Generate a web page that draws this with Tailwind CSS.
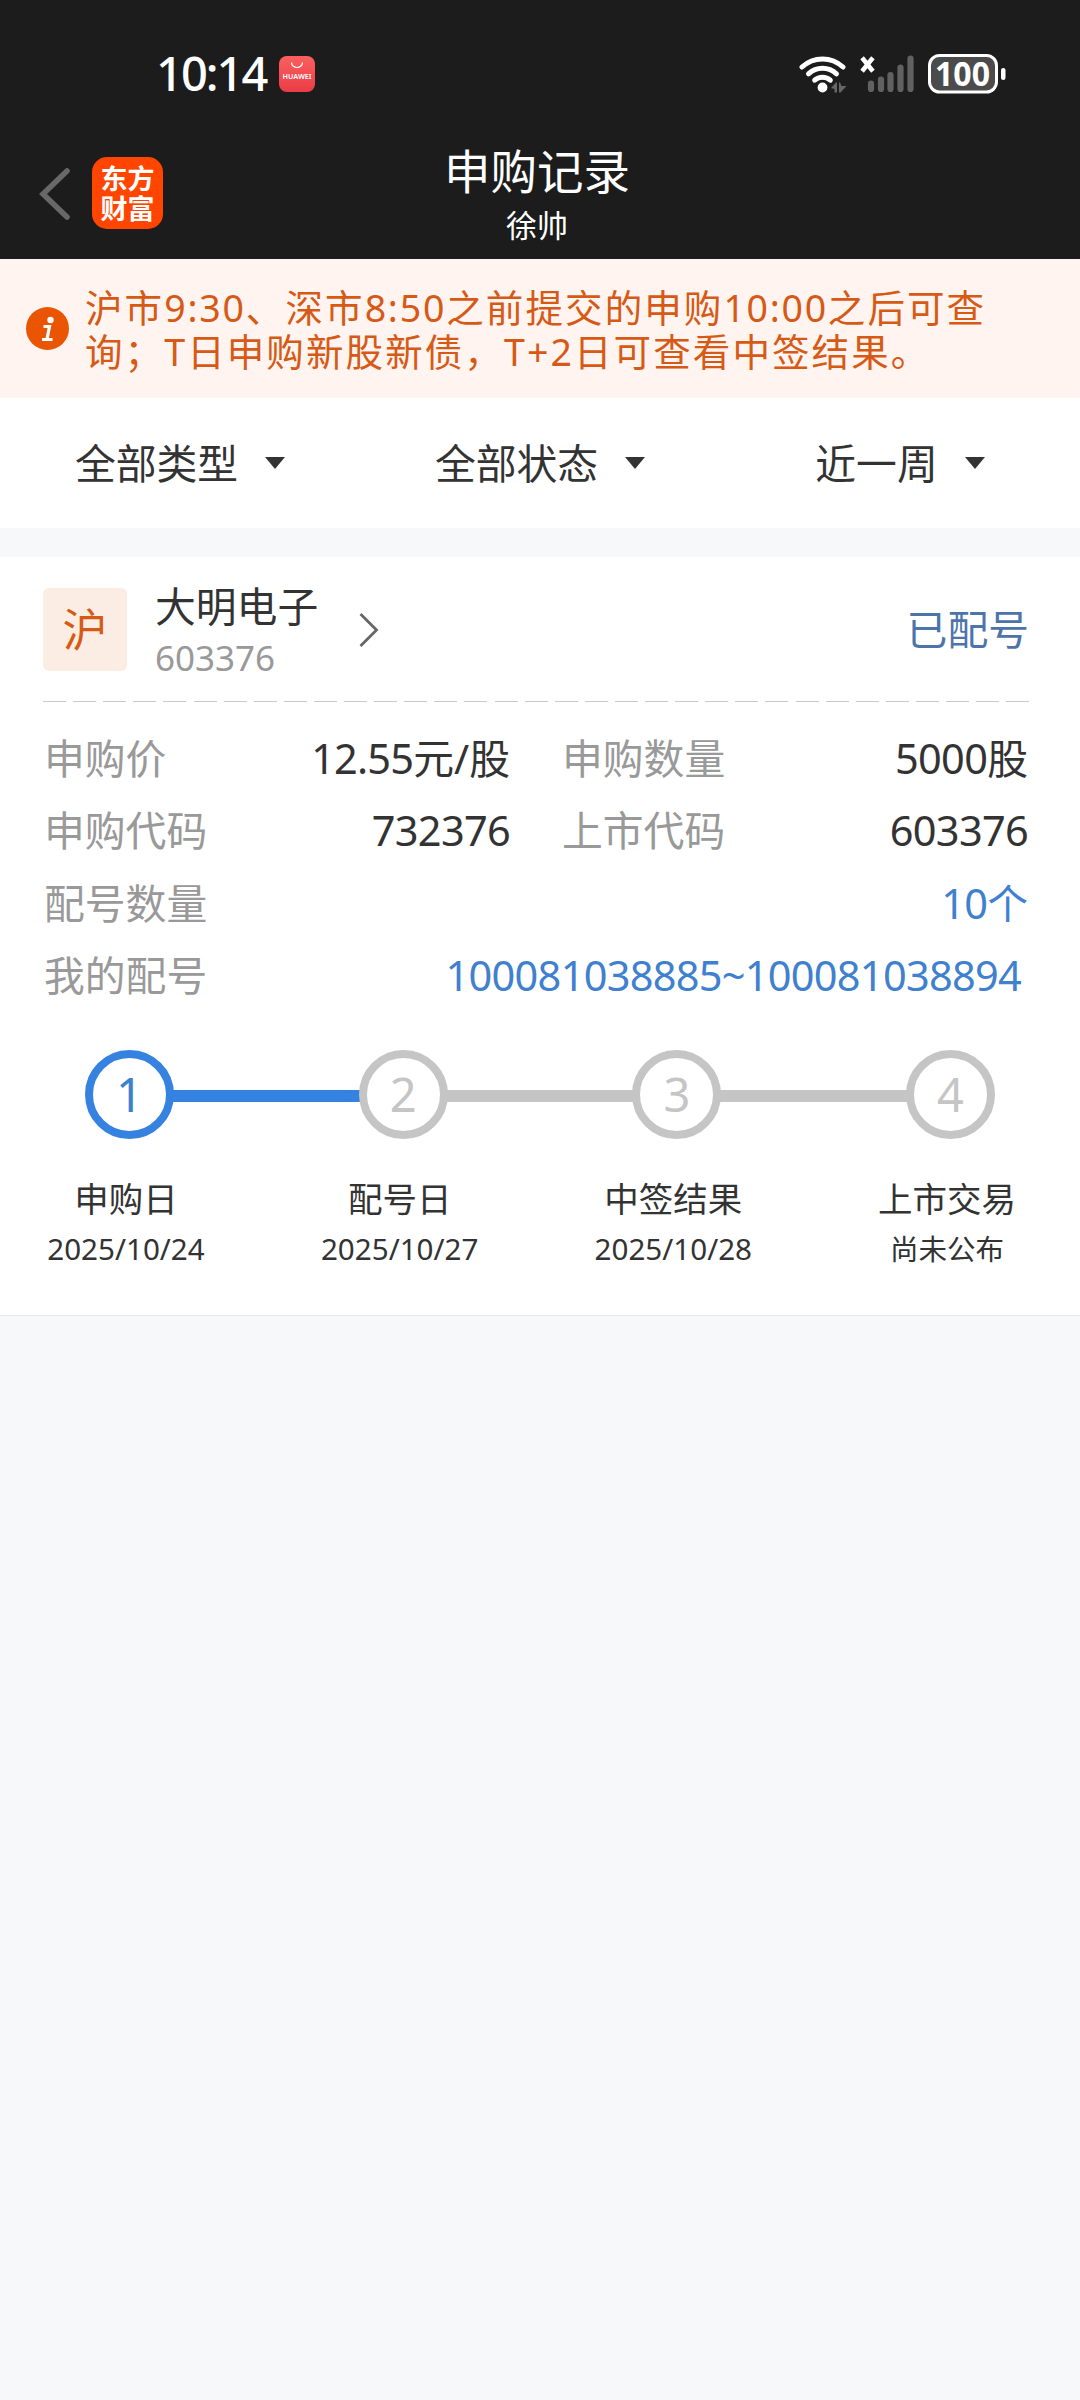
<!DOCTYPE html>
<html lang="zh-CN">
<head>
<meta charset="utf-8">
<title>申购记录</title>
<script src="https://cdn.jsdelivr.net/npm/@tailwindcss/browser@4"></script>
</head>
<body class="w-[1080px] h-[2400px] bg-[#f7f8fa] overflow-hidden text-[#333] text-[40.8px] leading-none font-['Noto_Sans','Noto_Sans_CJK_SC',sans-serif]">

<header class="h-[259px] bg-[#1c1c1c] text-white flex flex-col">
  <!-- status bar -->
  <div class="h-[148px] flex items-center justify-between pl-[156px] pr-[74px]">
    <div class="flex items-center gap-[10px]">
      <span class="w-[113px] text-[47px] font-medium tracking-[-2px] whitespace-nowrap pb-[2px]">10:14</span>
      <svg class="w-9 h-9" viewBox="0 0 36 36">
        <defs><linearGradient id="hw" x1="0" y1="0" x2="0" y2="1"><stop offset="0" stop-color="#fb6060"/><stop offset="1" stop-color="#ea3c46"/></linearGradient></defs>
        <rect width="36" height="36" rx="8" fill="url(#hw)"/>
        <path d="M12.500 6.500a5.500 5 0 0 0 11 0" fill="none" stroke="#fff" stroke-width="1.200"/>
        <text x="18" y="23" text-anchor="middle" textLength="29" lengthAdjust="spacingAndGlyphs" font-family="Noto Sans" font-size="7.500" font-weight="600" fill="#fff">HUAWEI</text>
      </svg>
    </div>
    <svg class="w-[207px] h-10" viewBox="0 0 207 40">
      <g fill="none" stroke="#fff" stroke-width="5" stroke-linecap="round">
        <path d="M3 13a30 30 0 0 1 41 0"/>
        <path d="M9.500 19.800a20.500 20.500 0 0 1 28 0"/>
        <path d="M15.700 26.200a11.500 11.500 0 0 1 15.600 0"/>
      </g>
      <circle cx="23.500" cy="33.500" r="4.900" fill="#fff"/>
      <path d="M32 34l5-5.500h1v10h-2.500v-3.500zM40 28.500h1l1.500 3.500h5l-5 5.500-1 1h-1.500z" fill="#666"/>
      <path d="M64.500 5.500l8 10M72.500 5.500l-8 10" stroke="#fff" stroke-width="4.500" stroke-linecap="square"/>
      <g stroke="#616161" stroke-width="6.200" stroke-linecap="round">
        <path d="M72 29.500v5.500M82 25.500v9.500M91.500 21v14M101.500 13.500v21.500M111.500 4.500v30.500"/>
      </g>
      <rect x="130.500" y="1.500" width="67" height="36.500" rx="10" fill="#4b4b4b" stroke="#fff" stroke-width="3"/>
      <rect x="202" y="14" width="4.500" height="12" rx="2.200" fill="#fff"/>
      <text x="163.500" y="31.500" text-anchor="middle" textLength="55" lengthAdjust="spacingAndGlyphs" font-family="Noto Sans" font-size="34" font-weight="700" fill="#fff">100</text>
    </svg>
  </div>
  <!-- title bar -->
  <div class="flex-1 grid grid-cols-3 pl-[38px]">
    <div class="flex items-start gap-[21px] pt-[9px]">
      <svg class="w-[33px] h-[72px]" viewBox="0 0 33 72"><path d="M29 14L5 37l24 23" fill="none" stroke="#686868" stroke-width="5.500" stroke-linecap="round"/></svg>
      <div class="w-[71px] h-[72px] rounded-[15px] bg-[#ff4500] flex flex-col items-center justify-center text-[27px] leading-[30px] font-bold font-['Noto_Sans_CJK_SC',sans-serif] pb-[1px]">
        <span>东方</span><span>财富</span>
      </div>
    </div>
    <div class="flex flex-col items-center -ml-[44px] -mt-[1px]">
      <h1 class="text-[46.5px] leading-[48px]">申购记录</h1>
      <p class="text-[31px] leading-[32px] mt-[14px]">徐帅</p>
    </div>
  </div>
</header>

<section class="h-[139px] bg-[#fff4ef] flex items-center pl-[26px]">
  <svg class="w-[43px] h-[43px]" viewBox="0 0 43 43">
    <circle cx="21.500" cy="21.500" r="21.500" fill="#ea5504"/>
    <circle cx="24.500" cy="13" r="3.200" fill="#fff"/>
    <path d="M17.500 19.500h6l-2.500 12.500M16 32.500h10.500" fill="none" stroke="#fff" stroke-width="3.200"/>
  </svg>
  <p class="ml-[16px] mt-[3px] text-[37.5px] leading-[44px] tracking-[2.1px] text-[#d65a16] whitespace-nowrap">沪市<span class="tracking-[1.8px]">9:30</span>、深市<span class="tracking-[1.8px]">8:50</span>之前提交的申购<span class="tracking-[1.7px]">10:00</span>之后可查<br>询；T日申购新股新债，T+2日可查看中签结果。</p>
</section>

<nav class="h-[130px] bg-white grid grid-cols-3">
  <div class="flex items-center justify-center gap-[27px]"><span class="pt-[1px]">全部类型</span><svg class="w-5 h-3" viewBox="0 0 20 12"><path d="M0 0h20L10 12z" fill="#333"/></svg></div>
  <div class="flex items-center justify-center gap-[27px]"><span class="pt-[1px]">全部状态</span><svg class="w-5 h-3" viewBox="0 0 20 12"><path d="M0 0h20L10 12z" fill="#333"/></svg></div>
  <div class="flex items-center justify-center gap-[27px]"><span class="pt-[1px]">近一周</span><svg class="w-5 h-3" viewBox="0 0 20 12"><path d="M0 0h20L10 12z" fill="#333"/></svg></div>
</nav>

<main class="mt-[29px] h-[759px] bg-white border-b border-[#e6e8eb]">
  <div class="h-[144px] ml-[43px] mr-[51px] pt-[31px] flex items-start">
    <div class="w-[84px] h-[83px] rounded-md bg-[#fcede4] text-[#d65a16] text-[45px] flex items-center justify-center">沪</div>
    <div class="ml-[28px] w-[164px]">
      <h2 class="leading-[37px]">大明电子</h2>
      <p class="text-[35px] leading-[36px] mt-[15px] text-[#999]">603376</p>
    </div>
    <svg class="ml-[39px] mt-[24px] w-[22px] h-[36px]" viewBox="0 0 22 36"><path d="M2.500 2L18.500 18 2.500 34" fill="none" stroke="#666" stroke-width="2.800"/></svg>
    <span class="ml-auto mt-[21px] leading-[40px] text-[#4c74aa]">已配号</span>
  </div>
  <div class="ml-[43px] w-[986px] h-px bg-[repeating-linear-gradient(90deg,#c9c9c9_0_23px,transparent_23px_30.1px)]"></div>
  <dl class="ml-[44px] mt-[20px] grid grid-cols-[466px_466px] gap-x-[52px] auto-rows-[72.5px]">
    <div class="flex items-center justify-between"><dt class="text-[#999]">申购价</dt><dd><span class="text-[41.5px] tracking-[-0.8px]">12.55</span>元/股</dd></div>
    <div class="flex items-center justify-between"><dt class="text-[#999]">申购数量</dt><dd><span class="text-[41.5px] tracking-[-0.7px]">5000</span>股</dd></div>
    <div class="flex items-center justify-between"><dt class="text-[#999]">申购代码</dt><dd class="text-[41.5px] tracking-[-0.7px]">732376</dd></div>
    <div class="flex items-center justify-between"><dt class="text-[#999]">上市代码</dt><dd class="text-[41.5px] tracking-[-0.7px]">603376</dd></div>
    <div class="col-span-2 flex items-center justify-between"><dt class="text-[#999]">配号数量</dt><dd class="text-[#3f80cf]"><span class="text-[41.5px] tracking-[-0.7px]">10</span>个</dd></div>
    <div class="col-span-2 flex items-center justify-between"><dt class="text-[#999]">我的配号</dt><dd class="text-[#3f80cf] mr-[7px] text-[41.5px] tracking-[-0.72px]">100081038885~100081038894</dd></div>
  </dl>
  <div class="mt-[38px] px-[85px] flex items-center text-[47px] text-[#c5c5c5]">
    <div class="w-[89px] h-[89px] rounded-full border-[8.5px] border-[#3582e0] text-[#3f80cf] flex items-center justify-center">1</div>
    <div class="flex-1 h-3 -mx-[2px] mt-[2px] bg-[#3582e0]"></div>
    <div class="w-[89px] h-[89px] rounded-full border-[8.5px] border-[#c5c5c5] flex items-center justify-center">2</div>
    <div class="flex-1 h-3 -mx-[2px] mt-[2px] bg-[#c5c5c5]"></div>
    <div class="w-[89px] h-[89px] rounded-full border-[8.5px] border-[#c5c5c5] flex items-center justify-center">3</div>
    <div class="flex-1 h-3 -mx-[2px] mt-[2px] bg-[#c5c5c5]"></div>
    <div class="w-[89px] h-[89px] rounded-full border-[8.5px] border-[#c5c5c5] flex items-center justify-center">4</div>
  </div>
  <div class="mt-[42px] pl-[26px] pr-[33px] flex justify-between text-center text-[34.5px] leading-[36px]">
    <div class="w-[200px]"><p>申购日</p><p class="mt-[14px] text-[29.6px]">2025/10/24</p></div>
    <div class="w-[200px]"><p>配号日</p><p class="mt-[14px] text-[29.6px]">2025/10/27</p></div>
    <div class="w-[200px]"><p>中签结果</p><p class="mt-[14px] text-[29.6px]">2025/10/28</p></div>
    <div class="w-[200px]"><p>上市交易</p><p class="mt-[14px] text-[28.5px]">尚未公布</p></div>
  </div>
</main>
</body>
</html>
